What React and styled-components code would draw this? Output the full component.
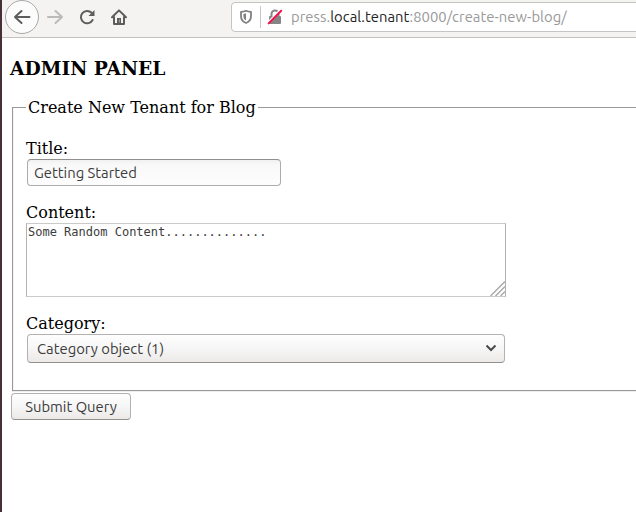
import React from "react";
import styled, { createGlobalStyle } from "styled-components";

const GlobalStyle = createGlobalStyle`
  * { box-sizing: border-box; }
  body { margin: 0; background: #fff; overflow: hidden; }
`;

const ui = `"Ubuntu", "Noto Sans", "Open Sans", sans-serif`;

const Window = styled.div`
  height: 512px;
  border-left: 2px solid #452f39;
  overflow: hidden;
  background: #fff;
  color: #000;
  font: 16px/19px "DejaVu Serif", serif;
`;

const Toolbar = styled.header`
  display: flex;
  align-items: flex-start;
  height: 38px;
  padding-left: 3px;
  background: #f4f3f1;
  border-bottom: 1px solid #c3c2c1;
`;

const NavButton = styled.button`
  display: flex;
  flex: none;
  align-items: center;
  justify-content: center;
  width: ${(p) => (p.$round ? 34 : 32)}px;
  height: 34px;
  padding: 0;
  border: ${(p) => (p.$round ? "1px solid #aaa9a8" : "0")};
  border-radius: 50%;
  background: ${(p) => (p.$round ? "#fcfcfc" : "transparent")};
  color: ${(p) => (p.$muted ? "#bcbbba" : "#5d5d5b")};
`;

const AddressBar = styled.div`
  display: flex;
  flex: none;
  align-items: center;
  width: 420px;
  height: 30px;
  margin: 2px 0 0 96px;
  padding-left: 7px;
  border: 1px solid #c4c4c3;
  border-radius: 4px;
  background: #fff;
`;

const Divider = styled.span`
  width: 1px;
  height: 22px;
  margin: 0 6px 0 7px;
  background: #c8c8c8;
`;

const Url = styled.span`
  margin-left: 8px;
  font: 14.8px/20px ${ui};
  letter-spacing: 0.04px;
  white-space: nowrap;
  color: #999;
`;

const Host = styled.span`
  color: #242424;
`;

const Page = styled.main`
  padding: 19px 0 0 8px;
`;

const Heading = styled.h3`
  margin: 0;
  font-size: 18.72px;
  line-height: 22px;
  font-weight: bold;
`;

const Fieldset = styled.fieldset`
  width: 660px;
  height: 293px;
  margin: 19px 0 0 2px;
  padding: 22px 13px 0;
  border: 1px solid #999;
  box-shadow: 0 1px 0 #eeeeed, inset 1px 0 0 #f4f4f3;
`;

const Legend = styled.legend`
  padding: 0 2px;
`;

const Field = styled.div`
  display: flex;
  flex-direction: column;
  align-items: flex-start;
  height: ${(p) => p.$height}px;
`;

const Label = styled.label`
  height: 20px;
  line-height: 20px;
`;

const TextInput = styled.input`
  width: 254px;
  height: 27px;
  margin-left: 1px;
  padding: 0 6px;
  border: 1px solid #acacaa;
  border-top-color: #8f8f8e;
  border-radius: 4px;
  outline: 0;
  background: linear-gradient(#f1f1f1, #f9f9f9 5px, #fdfdfd);
  color: #3c3c3c;
  font: 14.8px/20px ${ui};
`;

const AreaFrame = styled.div`
  position: relative;
  width: 480px;
  height: 74px;
`;

const Area = styled.textarea`
  display: block;
  width: 100%;
  height: 100%;
  padding: 1px;
  border: 1px solid #cacaca;
  border-left-color: #b2b2b2;
  border-right-color: #b2b2b2;
  outline: 0;
  resize: none;
  overflow: hidden;
  background: #fff;
  color: #3c3c3c;
  font: 12px/14px "DejaVu Sans Mono", monospace;
`;

const Grip = styled.svg`
  position: absolute;
  right: 1px;
  bottom: 1px;
`;

const Select = styled.button`
  display: flex;
  align-items: center;
  justify-content: space-between;
  width: 478px;
  height: 29px;
  margin-left: 1px;
  padding: 0 7px 0 9px;
  border: 1px solid #b3b2b0;
  border-bottom-color: #929190;
  border-radius: 4px;
  background: linear-gradient(#fefefe, #f7f6f6 50%, #ebeae8);
  color: #3c3c3c;
  font: 14.8px/20px ${ui};
`;

const Chevron = styled.svg`
  margin-top: -2px;
`;

const Submit = styled.button`
  display: block;
  width: 120px;
  height: 27px;
  margin: 2px 0 0 1px;
  padding: 0;
  border: 1px solid #b3b2b0;
  border-bottom-color: #929190;
  border-radius: 4px;
  background: linear-gradient(#fefefe, #f7f6f6 50%, #ebeae8);
  color: #3c3c3c;
  font: 14.8px/20px ${ui};
`;

const ArrowIcon = ({ flip }) => (
  <svg width="18" height="18" viewBox="0 0 18 18" fill="none" stroke="currentColor" strokeWidth="2" strokeLinecap="round" strokeLinejoin="round">
    <path d={flip ? "M2 9H16M9.5 3L16 9L9.5 15" : "M16.5 9H2M8.5 3L2 9L8.5 15"} />
  </svg>
);

const ReloadIcon = () => (
  <svg width="18" height="18" viewBox="0 0 18 18" fill="none" stroke="currentColor" strokeWidth="2" strokeLinecap="round">
    <path d="M14.6 12A6.2 6.2 0 1 1 13.6 4.8" />
    <path d="M16.5 2V8H10.5Z" fill="currentColor" stroke="none" />
  </svg>
);

const HomeIcon = () => (
  <svg width="18" height="18" viewBox="0 0 18 18" fill="none" stroke="currentColor" strokeWidth="2" strokeLinecap="round" strokeLinejoin="round">
    <path d="M2 9.2L9 2.4L16 9.2M4 9V16H14V9" />
    <path d="M7 10H11V16H7Z" fill="currentColor" stroke="none" />
    <path d="M9.4 12V14" stroke="#aaa" strokeWidth="1" />
  </svg>
);

const ShieldIcon = () => (
  <svg width="14" height="16" viewBox="0 0 14 16" fill="none">
    <path d="M7 1.8C5.2 2.6 3.4 2.9 2 3V7C2 10.5 3.8 12.8 7 14C10.2 12.8 12 10.5 12 7V3C10.6 2.9 8.8 2.6 7 1.8Z" stroke="#808080" strokeWidth="1.8" strokeLinejoin="round" />
    <path d="M7 4.3C6 4.7 5.2 4.9 4.4 5V7C4.4 9.2 5.3 10.5 7 11.4Z" fill="#808080" />
  </svg>
);

const LockIcon = () => (
  <svg width="16" height="16" viewBox="0 0 16 16" fill="none">
    <path d="M4.5 8V5A3.5 3.5 0 0 1 11.5 5V8" stroke="#858585" strokeWidth="2" />
    <rect x="2" y="7" width="12" height="8" rx="1" fill="#858585" />
    <path d="M1 13.4L13.4 1" stroke="#fff" strokeWidth="2" />
    <path d="M1.6 14.4L14.2 1.8" stroke="#f5124d" strokeWidth="2" strokeLinecap="round" />
  </svg>
);

export default function App() {
  return (
    <>
      <GlobalStyle />
      <Window>
        <Toolbar>
          <NavButton $round aria-label="Back"><ArrowIcon /></NavButton>
          <NavButton $muted aria-label="Forward"><ArrowIcon flip /></NavButton>
          <NavButton aria-label="Reload"><ReloadIcon /></NavButton>
          <NavButton aria-label="Home"><HomeIcon /></NavButton>
          <AddressBar>
            <ShieldIcon />
            <Divider />
            <LockIcon />
            <Url>press.<Host>local.tenant</Host>:8000/create-new-blog/</Url>
          </AddressBar>
        </Toolbar>
        <Page>
          <Heading>ADMIN PANEL</Heading>
          <Fieldset>
            <Legend>Create New Tenant for Blog</Legend>
            <Field $height={64}>
              <Label htmlFor="title">Title:</Label>
              <TextInput id="title" defaultValue="Getting Started" />
            </Field>
            <Field $height={111}>
              <Label htmlFor="content">Content:</Label>
              <AreaFrame>
                <Area id="content" spellCheck={false} defaultValue="Some Random Content.............." />
                <Grip width="15" height="15" viewBox="0 0 15 15" fill="none" stroke="#aaa" strokeWidth="1.5">
                  <path d="M0.5 15L15 0.5M5.5 15L15 5.5M10.5 15L15 10.5" />
                </Grip>
              </AreaFrame>
            </Field>
            <Field $height={49}>
              <Label htmlFor="category">Category:</Label>
              <Select id="category" type="button">
                <span>Category object (1)</span>
                <Chevron width="12" height="8" viewBox="0 0 12 8" fill="none" stroke="#484b4d" strokeWidth="2">
                  <path d="M1.5 1.5L6 6L10.5 1.5" />
                </Chevron>
              </Select>
            </Field>
          </Fieldset>
          <Submit type="button">Submit Query</Submit>
        </Page>
      </Window>
    </>
  );
}
